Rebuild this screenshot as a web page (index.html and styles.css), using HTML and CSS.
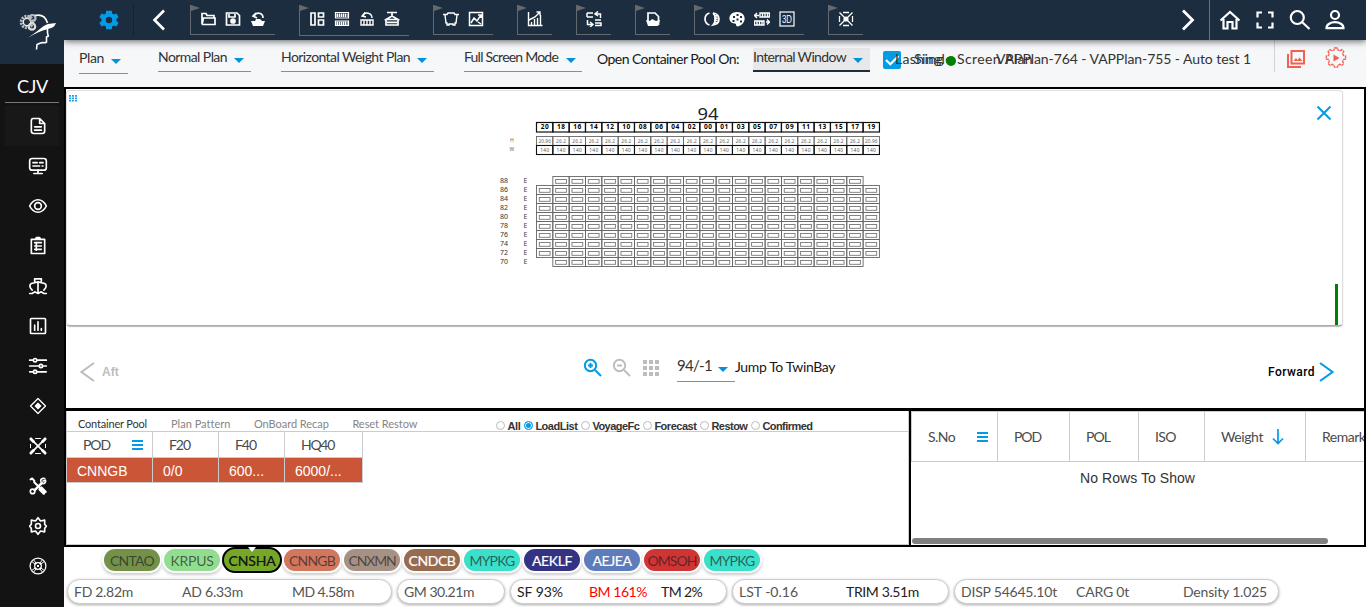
FILE: index.html
```html
<!DOCTYPE html>
<html lang="en">
<head>
<meta charset="utf-8">
<title>Stowage Planner</title>
<link rel="stylesheet" href="styles.css">
</head>
<body>
<div class="app">
  <aside class="sidebar">
    <div class="logo">
      <svg width="40" height="40" viewBox="0 0 40 40" fill="none" stroke="#fff">
        <circle cx="9" cy="10" r="5.800" stroke="#bbb" stroke-width="3" stroke-dasharray="2 1"/>
        <circle cx="9" cy="10" r="3.700" stroke="#eee" stroke-width="1.400"/>
        <circle cx="14.500" cy="6" r="3" stroke="#bbb" stroke-width="2.200"/><circle cx="14" cy="14.500" r="3.200" stroke="#ddd" stroke-width="2.200"/>
        <path d="M17 3.500c7-1.500 11 2.500 12.500 7.500M29.500 17v4l.8 3-1.800 1v5c-2 1.500-4 0-6 1l-3.500 1.500-.5 5" stroke-width="1.600"/>
        <path d="M9.500 26C18 21 24 14 30 12l8-1c-1.500 4-4 5-8 6-7 1.500-13 5-20.500 9z" fill="#fff" stroke="none"/>
      </svg>
    </div>
    <div class="vessel"><span class="fit" data-w="31">CJV</span></div>
    <nav class="side-nav" id="side-nav"></nav>
  </aside>
  <main class="main">
    <header class="topbar">
      <span class="gear-button"><svg width="24" height="24" viewBox="0 0 24 24" fill="#039be5"><path d="M19.400 13c.1-.7.1-1.300 0-2l2.200-1.700-2.100-3.700-2.600 1c-.5-.4-1.100-.7-1.700-1L14.800 2.700H9.200l-.4 2.900c-.6.3-1.200.6-1.700 1l-2.600-1-2.100 3.700L4.600 11c-.1.700-.1 1.300 0 2l-2.200 1.700 2.100 3.700 2.600-1c.5.4 1.100.7 1.700 1l.4 2.900h5.600l.4-2.900c.6-.3 1.200-.6 1.700-1l2.600 1 2.100-3.700zM12 15.200a3.200 3.200 0 1 1 0-6.400 3.200 3.200 0 0 1 0 6.400z"/></svg></span>
      <span class="previous"><svg width="14" height="22" viewBox="0 0 14 22"><path d="M12 1.500 2.500 11 12 20.500" fill="none" stroke="#fff" stroke-width="2.600"/></svg></span>
      <div class="tools" id="tools"></div>
      <span class="next"><svg width="14" height="22" viewBox="0 0 14 22"><path d="M2 1.500 11.500 11 2 20.500" fill="none" stroke="#fff" stroke-width="2.800"/></svg></span>
      <div class="account">
        <svg viewBox="0 0 24 24"><path d="M2.500 12.500 12 4l9.500 8.500M5.500 11v9.500h4V14h5v6.500h4V11"/></svg>
        <svg viewBox="0 0 24 24"><path d="M4.500 9.500v-5H9M15 4.500h4.500v5M19.500 14.500v5H15M9 19.500H4.500v-5"/></svg>
        <svg viewBox="0 0 24 24"><circle cx="9.300" cy="9.500" r="6.500"/><path d="m14 14 7.500 7"/></svg>
        <svg viewBox="0 0 24 24"><circle cx="12" cy="7" r="4"/><path d="M3.500 20.200c0-8 17-8 17 0z"/></svg>
      </div>
    </header>
    <section class="filters">
      <div class="select s-plan"><span class="fit" data-w="25">Plan</span><i class="caret"></i></div>
      <div class="select s-normal"><span class="fit" data-w="69">Normal Plan</span><i class="caret"></i></div>
      <div class="select s-weight"><span class="fit" data-w="129">Horizontal Weight Plan</span><i class="caret"></i></div>
      <div class="select s-mode"><span class="fit" data-w="94">Full Screen Mode</span><i class="caret"></i></div>
      <label class="pool-label"><span class="fit" data-w="142">Open Container Pool On:</span></label>
      <div class="select s-window"><span class="fit" data-w="93">Internal Window</span><i class="caret"></i></div>
      <span class="checkbox"><svg width="18" height="18" viewBox="0 0 18 18"><path d="m3 9 4.300 4.300L15.500 5" fill="none" stroke="#fff" stroke-width="2.200"/></svg></span>
      <div class="plan-info">
        <span class="fit single" data-w="119">Single Screen Plan</span>
        <span class="fit lashing" data-w="49">Lashing</span>
        <i class="status"></i>
        <span class="fit plan-name" data-w="255">VAPPlan-764 - VAPPlan-755 - Auto test 1</span>
      </div>
      <div class="plan-actions">
        <svg width="20" height="20" viewBox="0 0 20 20" fill="none" stroke="#f4604f" stroke-width="2"><path d="M5.500 2h12.500v12.500H5.500zM2 5v13h13"/><path d="m7.500 12 2.500-3 1.500 2 2-2.500 3 3.500z" fill="#f4604f" stroke="none"/></svg>
        <svg width="22" height="22" viewBox="0 0 22 22" fill="none" stroke="#f4604f"><path d="M9.500 1h3l.5 2 2 .8 1.800-1.200 2 2-1.200 1.900.8 2 2.200.5v3l-2.200.5-.8 2 1.200 2-2 2-1.800-1.200-2 .8-.5 2h-3l-.5-2-2-.8-1.900 1.200-2-2 1.200-2-.8-2L1.300 12V9l2.200-.5.8-2-1.200-1.900 2-2L7 3.800 9 3z" stroke-width="1.300" stroke-dasharray="3 .6"/><path d="m8.500 7.500 6 3.500-6 3.500z" fill="#f4604f" stroke="none"/></svg>
      </div>
    </section>
    <section class="workspace">
      <div class="bay-pane">
        <div class="bay-card">
          <svg class="grip" width="8" height="7" viewBox="0 0 8 7"><path d="M1 0v7M4 0v7M7 0v7" stroke="#039be5" stroke-width="1.800" stroke-dasharray="1.700 .7"/></svg>
          <svg class="bay" id="bay" width="400" height="172" viewBox="490 100 400 172"></svg>
          <svg class="close" width="16" height="16" viewBox="0 0 16 16"><path d="m1.500 1.500 13 13m0-13-13 13" stroke="#039be5" stroke-width="2"/></svg>
          <i class="meter"></i>
        </div>
        <div class="bay-nav">
          <svg class="aft-arrow" width="15" height="20" viewBox="0 0 15 20"><path d="M14 1 1.500 10 14 19" fill="none" stroke="#bdbdbd" stroke-width="2"/></svg>
          <b class="aft">Aft</b>
          <div class="zoom-tools">
            <svg width="20" height="20" viewBox="0 0 20 20" fill="none" stroke="#039be5" stroke-width="2"><circle cx="7.500" cy="7.500" r="5.700"/><path d="m12 12 6 6M7.500 5v5M5 7.500h5"/></svg>
            <svg width="20" height="20" viewBox="0 0 20 20" fill="none" stroke="#bdbdbd" stroke-width="1.900"><circle cx="7.500" cy="7.500" r="5.700"/><path d="m12 12 6 6M5 7.500h5"/></svg>
            <svg width="20" height="20" viewBox="0 0 20 20" fill="#bdbdbd"><path d="M2 2h4v4H2zm6 0h4v4H8zm6 0h4v4h-4zM2 8h4v4H2zm6 0h4v4H8zm6 0h4v4h-4zM2 14h4v4H2zm6 0h4v4H8zm6 0h4v4h-4z"/></svg>
          </div>
          <div class="select s-bay"><span class="fit" data-w="35">94/-1</span><i class="caret"></i></div>
          <span class="fit jump" data-w="100">Jump To TwinBay</span>
          <b class="fit forward" data-w="47">Forward</b>
          <svg class="forward-arrow" width="15" height="20" viewBox="0 0 15 20"><path d="M1 1l12.500 9L1 19" fill="none" stroke="#039be5" stroke-width="2"/></svg>
        </div>
      </div>
      <div class="lists">
        <div class="pool">
          <div class="tabs">
            <span class="fit tab active" data-w="69">Container Pool</span><span class="fit tab" data-w="59">Plan Pattern</span><span class="fit tab" data-w="75">OnBoard Recap</span><span class="fit tab" data-w="65">Reset Restow</span>
            <div class="radios">
              <i></i><b class="fit" data-w="13">All</b><i class="on"></i><b class="fit" data-w="42">LoadList</b><i></i><b class="fit" data-w="47">VoyageFc</b><i></i><b class="fit" data-w="42">Forecast</b><i></i><b class="fit" data-w="36">Restow</b><i></i><b class="fit" data-w="50">Confirmed</b>
            </div>
          </div>
          <div class="pool-body">
            <div class="pool-grid head"><div><span class="fit" data-w="27">POD</span><i class="menu"></i></div><div><span class="fit" data-w="21">F20</span></div><div><span class="fit" data-w="21">F40</span></div><div><span class="fit" data-w="33">HQ40</span></div></div>
            <div class="pool-grid row"><div>CNNGB</div><div>0/0</div><div>600...</div><div>6000/...</div></div>
          </div>
        </div>
        <div class="cargo">
          <div class="cargo-head"><div><span class="fit" data-w="27">S.No</span><i class="menu"></i></div><div><span class="fit" data-w="27">POD</span></div><div><span class="fit" data-w="24">POL</span></div><div><span class="fit" data-w="21">ISO</span></div><div><span class="fit" data-w="42">Weight</span><svg width="12" height="16" viewBox="0 0 12 16"><path d="M6 0v14M1 9.500l5 5 5-5" fill="none" stroke="#039be5" stroke-width="1.700"/></svg></div><div><span class="fit" data-w="49">Remarks</span></div></div>
          <div class="empty"><span class="fit" data-w="115">No Rows To Show</span></div>
          <i class="scrollbar"></i>
        </div>
      </div>
    </section>
    <div class="ports" id="ports"></div>
    <footer class="stats">
      <div class="stat s1"><span class="fit" data-w="59">FD 2.82m</span><span class="fit" data-w="61">AD 6.33m</span><span class="fit" data-w="62">MD 4.58m</span></div>
      <div class="stat s2"><span class="fit" data-w="70">GM 30.21m</span></div>
      <div class="stat s3"><span class="fit" data-w="46">SF 93%</span><span class="fit alert" data-w="58">BM 161%</span><span class="fit" data-w="41">TM 2%</span></div>
      <div class="stat s4"><span class="fit" data-w="59">LST -0.16</span><span class="fit strong" data-w="73">TRIM 3.51m</span></div>
      <div class="stat s5"><span class="fit" data-w="96">DISP 54645.10t</span><span class="fit" data-w="53">CARG 0t</span><span class="fit" data-w="84">Density 1.025</span></div>
    </footer>
  </main>
</div>
<script src="app.js"></script>
</body>
</html>
```
FILE: styles.css
```css
* { box-sizing: border-box; }
body { margin: 0; width: 1366px; height: 607px; overflow: hidden; background: #fff; font: 14px Lato, "Open Sans", sans-serif; color: #333; }
svg { display: block; flex: none; }
i { display: block; flex: none; }
.fit { display: inline-block; flex: none; white-space: nowrap; }
.app { display: grid; grid-template-columns: 64px 1302px; height: 607px; }

.sidebar { background: #131313; }
.logo { height: 64px; background: #1b2d3f; padding: 12px 0 0 18px; }
.vessel { height: 39px; margin: 0 5px; padding: 11px 0 0 12px; border-bottom: 1px solid #75797c; color: #fff; font-size: 18px; line-height: 22px; }
.side-nav { padding-top: 3px; }
.side-item { height: 40px; margin: 0 5px; padding: 10px 0 0 23px; }
.side-item.active { background: #181818; }
.side-item svg { width: 20px; height: 20px; fill: none; stroke: #fff; stroke-width: 2; stroke-linecap: round; stroke-linejoin: round; }

.main { display: grid; grid-template-rows: 40px 47px 460px 29px 31px; min-width: 0; }
.topbar { display: flex; background: #1b2d3f; box-shadow: 0 1px 7px rgba(0,0,0,.65); z-index: 2; clip-path: inset(0 0 -12px 0); }
.gear-button { flex: none; width: 70px; height: 32px; margin-top: 4px; padding: 4px 0 0 33px; border-right: 1px solid #16222f; }
.previous { flex: none; width: 56px; padding: 9px 0 0 18px; }
.tools { flex: none; display: flex; gap: 24px; padding-top: 5px; width: 990px; }
.tool-group { position: relative; height: 30px; display: flex; border-left: 1px solid #65686c; border-bottom: 1px solid #65686c; padding: 6px 5px 0 4px; }
.tool-group.low { height: 31px; }
.tool-group::before { content: ""; position: absolute; left: 0; top: 0; border-left: 9px solid #65686c; border-top: 3px solid transparent; border-bottom: 3px solid transparent; }
.tool-group svg { width: 16px; height: 16px; margin: 0 4.500px; fill: none; stroke: #fff; stroke-width: 1.700; }
.next { flex: none; width: 29px; padding-top: 9px; }
.next svg { margin-left: 1px; }
.account { display: flex; gap: 11px; padding: 8px 0 0 8px; border-left: 1px solid #65717d; }
.account svg { width: 24px; height: 24px; fill: none; stroke: #fff; stroke-width: 2.200; }

.filters { display: flex; align-items: flex-start; background: #f5f7f9; padding-left: 15px; }
.select { display: flex; justify-content: space-between; border-bottom: 1px solid #8b8d90; line-height: 18px; color: #333; }
.caret { width: 0; height: 0; border: 5px solid transparent; border-top-color: #0391dc; border-bottom: 0; margin: 10px 7px 0 0; }
.s-plan { width: 49px; height: 25px; margin: 9px 30px 0 0; }
.s-normal { width: 93px; height: 24px; margin: 8px 30px 0 0; }
.s-weight { width: 153px; height: 24px; margin: 8px 30px 0 0; }
.s-mode { width: 118px; height: 24px; margin: 8px 15px 0 0; }
.s-mode .caret { margin-right: 6px; }
.pool-label { width: 156px; margin-top: 9px; line-height: 20px; color: #171717; }
.s-window { width: 117px; height: 24px; margin: 8px 13px 0 0; background: #e8e8ea; border-bottom: 2px solid #1b2d3f; }
.checkbox { width: 18px; height: 18px; margin-top: 11px; border-radius: 2px; background: #039be5; }
.plan-info { position: relative; width: 374px; height: 32px; border-right: 1px solid #d0d2d5; color: #333; line-height: 18px; }
.single, .lashing, .plan-name, .status { position: absolute; top: 10px; }
.single { left: 13px; }
.lashing { left: -6px; }
.plan-name { left: 95px; }
.status { left: 45px; top: 16px; width: 10px; height: 10px; border-radius: 50%; background: green; }
.plan-actions { display: flex; gap: 19px; padding: 9px 0 0 11px; }
.plan-actions svg:last-child { margin-top: -2px; }

.workspace { border: 2px solid #000; display: grid; grid-template-rows: 319px 137px; min-width: 0; }
.bay-pane { min-width: 0; padding-top: 1px; }
.bay-card { position: relative; display: flex; align-items: flex-start; width: 1277px; height: 236px; border: 1px solid #ddd; border-bottom-color: #aaa; border-radius: 4px; box-shadow: 0 1px 1px #bbb; }
.grip { margin: 4px 0 0 2px; }
.bay { margin: 9px 0 0 413px; }
.close { margin: 14px 0 0 426px; }
.meter { position: absolute; right: 4px; bottom: 0; width: 3px; height: 41px; background: green; }
.bay-nav { display: flex; height: 80px; align-items: flex-start; padding-left: 14px; color: #171717; }
.aft-arrow { margin-top: 36px; }
.aft { width: 482px; margin: 38px 0 0 7px; color: #bdbdbd; font: bold 12px/16px "Liberation Sans", sans-serif; }
.zoom-tools { display: flex; gap: 9px; padding-top: 32px; margin-left: -1px; width: 94px; }
.s-bay { width: 58px; height: 24px; margin-top: 32px; font-size: 15px; line-height: 15px; }
.s-bay .caret { margin-top: 9px; }
.jump { margin: 32px 433px 0 0; line-height: 18px; }
.forward { margin: 37px 4px 0 0; font: 500 12px/18px Roboto, sans-serif; color: #000; }
.forward-arrow { margin-top: 36px; }

.lists { display: grid; grid-template-columns: 843px 455px; border-top: 3px solid #000; min-width: 0; }
.pool { border: 1px solid #ccc; border-width: 0 1px 1px; }
.tabs { display: flex; height: 20px; padding: 6px 0 0 11px; gap: 24px; font-size: 11px; line-height: 14px; color: #858585; }
.tab.active { color: #333; }
.tab:nth-child(n+3) { margin-left: -.5px; }
.radios { position: relative; display: flex; margin-left: 52px; top: 2px; font: bold 11px/14px "Liberation Sans", sans-serif; color: #333; }
.radios i { width: 9px; height: 9px; margin: 2px 2px 0 4px; border: 1px solid #bbb; border-radius: 50%; background: #fff; }
.radios i:first-child { margin-left: 3px; }
.radios i.on { border-color: #039be5; box-shadow: inset 0 0 0 1px #fff; background: #039be5; }
.pool-body { border-top: 1px solid #ccc; }
.pool-grid { display: grid; grid-template-columns: 86px 66px 66px 78px; width: 296px; }
.pool-grid > div { border-right: 1px solid #ccc; border-bottom: 1px solid #ccc; display: flex; align-items: center; }
.head { height: 26px; color: #4a4a4a; }
.head > div { padding-left: 16px; }
.head .menu { margin-left: 22px; }
.row { height: 25px; font: 14px "Liberation Sans", sans-serif; color: #fff; }
.row > div { padding: 1px 0 0 10px; background: #cb5637; }
.menu { width: 11px; height: 10px; border-top: 2px solid #039be5; border-bottom: 2px solid #039be5; background: linear-gradient(#039be5, #039be5) 0 2px / 11px 2px no-repeat; }
.cargo { border-left: 2px solid #000; overflow: hidden; }
.cargo-head { display: grid; grid-template-columns: 86px 72px 69px 66px 101px 90px; width: 485px; height: 51px; border: 1px solid #ccc; border-width: 1px 0 1px 1px; color: #4a4a4a; }
.cargo-head > div { display: flex; align-items: center; padding: 0 0 0 16px; border-right: 1px solid #ccc; }
.cargo-head .menu { margin-left: 22px; }
.cargo-head svg { margin-left: 9px; }
.empty { height: 75px; padding-top: 6px; text-align: center; font: 14px/20px "Liberation Sans", sans-serif; }
.scrollbar { width: 416px; height: 6px; margin: 1px 0 0 1px; border-radius: 4px; background: #808080; }

.ports { display: flex; gap: 4px; padding: 2px 0 0 40px; }
.port { display: flex; justify-content: center; width: 56px; height: 22px; border-radius: 12px; line-height: 23px; font-size: 14px; color: rgba(30,30,30,.67); box-shadow: 0 0 0 2px #fff, 0 2px 3px 2px #ccc; }
.port.light { color: #fff; -webkit-text-stroke: .2px #fff; }
.port.current { position: relative; color: #111; box-shadow: 0 0 0 2px #000; -webkit-text-stroke: .2px #111; }
.port.current::before { content: ""; position: absolute; top: -2px; left: 24px; border: 4px solid transparent; border-top: 5px solid #fff; border-bottom: 0; }

.stats { display: flex; gap: 5px; padding: 3px 0 0 3px; }
.stat { display: flex; height: 25px; padding-left: 6px; border: 1px solid #ccc; border-radius: 13px; box-shadow: 0 1px 3px #aaa; line-height: 24px; color: #555; background: #fff; }
.s1 { width: 325px; gap: 49px; }
.s2 { width: 108px; }
.s3 { width: 217px; gap: 26px; color: #222; }
.s3 span:last-child { margin-left: -12px; }
.s4 { width: 217px; gap: 48px; }
.s5 { width: 325px; gap: 19px; }
.s5 span:last-child { margin-left: 35px; }
.alert { color: red; }
.strong { color: #222; }
```
FILE: app.js
```js
// Tool icons share a 16 unit grid.
const toolIcons = {
  open: '<path d="M2 13.500V2.500h4l1 2h7v2M2 13.500l1.500-6.500H15v6.500H2"/>',
  save: '<path d="M1.500 2h10.500l2.500 2.500V14h-13zM4 3v3h6V3"/><circle cx="8" cy="10" r="2" fill="#fff"/>',
  undoShip: '<path d="M4 5c2-4 9-4 9 2M6 2 3 5l4 2"/><path d="M1 10h4l1-2h4l2 2h3l-2 5H3z" fill="#fff" stroke="none"/>',
  layout: '<path d="M2 2h4v12H2zM9.500 2h5v4h-5zM9.500 9h5v5h-5z"/>',
  stacks: '<path d="M1.500 1.500h13V7h-13zM1.500 10h13v4.500h-13z" stroke-width="1.200"/><path d="M2.500 4.300h11M2.500 12.300h11" stroke-width="3.500" stroke-dasharray="1.500 .6"/>',
  undoBox: '<path d="M4 5c2-5 9-3 9 2M6 1.500 3 5l4 1M2 9h12v5H2zM5 9v5M8 9v5M11 9v5" stroke-width="1.400"/>',
  lift: '<path d="M3 1.500h10M8 2v3L2 8.500h12L8 5M2 8.500h12V14H2zM3 11.300h10"/>',
  bay: '<path d="M0 3.500h4l1-1.500h6l1 1.500h4M2 4l1 8h1v2h2v-1h4v1h2v-2h1l1-8" stroke-width="1.400"/>',
  image: '<path d="M1.500 1.500h13v13h-13zM3 12l3-5 3 3 4-6M10 4h3v3M10 11l3 2" stroke-width="1.500"/>',
  chart: '<path d="M1.500 1v13.500h14M4.500 14v-3M7.500 14V8M10.500 14V7M13.500 14V4M2 9l6-3 5-5M9.500 1H13v3.500" stroke-width="1.400"/>',
  swap: '<path d="M1 2h6M1 6h6M1 2v4M9 3h5.500v4M12 .5 9 3l3 2M1.500 9v4.500H6M4 11l3 2.500L4 16M9 9h6M9 12h6v2.500H9" stroke-width="1.500"/>',
  docShip: '<path d="M3 11V2h7l3.500 3.500V14"/><path d="m1 9 4 1 2-2 4 2 4-1-2 6H3z" fill="#fff" stroke="none"/>',
  contrast: '<path d="M5.500 2C-.5 4-.5 12 5.500 14M9 2c8 1 8 11 0 12 3-3 3-9 0-12"/><path d="M12 4v8" stroke-width="3.500" stroke-dasharray="1.700 .6"/>',
  palette: '<path fill="#fff" fill-rule="evenodd" stroke="none" d="M8 1C-2 1-1.500 13 6 12.500c2 0 0 3 3 3C18 13 18 1 8 1zM4 5h2v2H4zM7.500 3h2v2h-2zM11 5h2v2h-2zM3.500 9h2v2h-2zM7.500 7.500h2v2h-2zM11 9.500h2v2h-2z"/>',
  exchange: '<path d="M6 2h9.500v4H6zM.5 10H10v4H.500zM8.500 2v4M11 2v4M13.500 2v4M3 10v4M5.500 10v4M8 10v4M0 4.500h5M3 2 .5 4.500 3 7M12 11h4M13 8.500l2.500 2.500-2.500 2.500" stroke-width="1.400"/>',
  threeD: '<rect x="1" y="1" width="14" height="14" stroke-width="1.200"/><text x="3" y="11.800" fill="#fff" stroke="none" font-family="Liberation Sans" font-size="10" textLength="10" lengthAdjust="spacingAndGlyphs">3D</text>',
  cross: '<path d="M5 1.500h6M14.500 5v6M11 14.500H5M1.500 11V5M1.500 1.500l13 13M14.500 1.500l-13 13" stroke-width="1.300"/><circle cx="8" cy="8" r="2.600" fill="#fff" stroke="none"/>'
};
const groups = [['open','save','undoShip'],['layout','stacks','undoBox','lift'],['bay','image'],['chart'],['swap'],['docShip'],['contrast','palette','exchange','threeD'],['cross']];
document.getElementById('tools').innerHTML = groups.map((g, i) =>
  `<div class="tool-group${i === 1 ? ' low' : ''}">${g.map(n => `<svg viewBox="0 0 16 16">${toolIcons[n]}</svg>`).join('')}</div>`).join('');

// Sidebar icons share a 24 unit grid.
const sideIcons = [
  '<path d="M6 3h8l6 6v9q0 3-3 3H7q-3 0-3-3V6q0-3 2-3zM14 3v6h6M8 13h8M8 17h8"/>',
  '<rect x="2" y="3" width="20" height="14" rx="3"/><path d="M6 8h5M14 8h4M6 12h8M17 12h1M12 17v4M7 21h10"/>',
  '<path d="M2 12C7 2 17 2 22 12 17 22 7 22 2 12z"/><circle cx="12" cy="12" r="4"/>',
  '<path d="M4 4h16v17H4zM9 4l1-2h4l1 2M8 8h8M8 12h8M8 16h8M10 8v9"/>',
  '<path d="M8 7V3.500h8V7M5 17C1 13 2 10 4 9l8-2 8 2c2 1 3 4-1 8M12 7v13M2 21h3l3-2 4 2 4-2 3 2h3"/>',
  '<rect x="3" y="3" width="18" height="18" rx="1"/><path d="M8 17v-6M12 17V7M16 17v-2"/>',
  '<path d="M2 5h4M11 5h11M2 12h11M18 12h4M2 19h4M11 19h11"/><circle cx="8.500" cy="5" r="2"/><circle cx="15.500" cy="12" r="2"/><circle cx="8.500" cy="19" r="2"/>',
  '<path d="m12 3 9 9-9 9-9-9z" stroke-width="1.500"/><path d="m12 9 3 3-3 3-3-3z" fill="#fff"/>',
  '<path d="M4 4l16 16M20 4 4 20"/><path d="M3.500 3.500l3 3M20.500 3.500l-3 3M3.500 20.500l3-3M20.500 20.500l-3-3" stroke-width="3.500"/><path d="M9 3h6M9 21h6M3 10v4M21 10v4" stroke-width="1.200"/>',
  '<path d="m3 4 2-1 2.500 2.500v2L15 15" stroke-width="2.400"/><path d="m14 16 5 5M16 14l5 5" stroke-width="3"/><path d="M8 17 16.500 8.500" stroke-width="3"/><path d="M20 3c-5-1-6 3-3.500 5.500C19 10 22 8 21 5l-3 1"/><circle cx="5.500" cy="18.500" r="2.700"/>',
  '<path d="m12 2 3 4 5-1v5l2 2-2 3v4l-5-1-3 4-3-4-5 1v-4l-2-3 2-2V5l5 1z"/><circle cx="12" cy="12" r="3"/>',
  '<circle cx="12" cy="12" r="9.500" stroke-width="1.500"/><circle cx="12" cy="12" r="4" stroke-width="1.500"/><path d="M5 7l4 3M7 5l3 4M19 7l-4 3M17 5l-3 4M5 17l4-3M7 19l3-4M19 17l-4-3M17 19l-3-4M11 11l2 2M13 11l-2 2" stroke-width="1.200"/>'
];
document.getElementById('side-nav').innerHTML = sideIcons.map((p, i) =>
  `<div class="side-item${i ? '' : ' active'}"><svg viewBox="0 0 24 24">${p}</svg></div>`).join('');

// Bay profile: stack headers, limits and one slot per cell.
const cols = '20 18 16 14 12 10 08 06 04 02 00 01 03 05 07 09 11 13 15 17 19'.split(' ');
const x0 = 536.5, step = 16.33;
let bay = '<text x="697.500" y="120" font-size="17" textLength="21" lengthAdjust="spacingAndGlyphs" fill="#222">94</text>';
const cell = (x, y, h, c, w) => `<rect x="${x}" y="${y}" width="${step}" height="${h}" fill="none" stroke="${c}" stroke-width="${w}"/>`;
cols.forEach((n, i) => {
  const x = x0 + step * i, m = x + step / 2, edge = i === 0 || i === 20;
  bay += cell(x, 122.500, 9.500, '#111', 1.200) + cell(x, 136.500, 9, '#666', .9) + cell(x, 145.500, 9, '#111', 1.100);
  bay += `<text x="${m}" y="129.300" font-size="6.500" font-weight="700" text-anchor="middle" textLength="8">${n}</text>`;
  bay += `<text x="${m}" y="142.500" font-size="4.800" text-anchor="middle" textLength="${edge ? 12.5 : 10}" fill="#666">${edge ? '20.96' : '26.2'}</text>`;
  bay += `<text x="${m}" y="151.500" font-size="4.800" text-anchor="middle" textLength="9" fill="#555">140</text>`;
});
bay += '<text x="510" y="142" font-size="5" fill="#666">H</text><text x="509.500" y="151" font-size="5" fill="#666">W</text>';
for (let r = 0; r < 10; r++) {
  const y = 176.500 + r * 9;
  bay += `<text x="500" y="${y + 6}" font-size="7" textLength="8" fill="#333">${88 - 2 * r}</text><text x="523.500" y="${y + 6}" font-size="7" fill="#444">E</text>`;
  cols.forEach((n, i) => {
    if ((r === 0 || r === 9) && (i === 0 || i === 20)) return;
    const x = x0 + step * i;
    bay += cell(x, y, 9, '#666', .9) + `<rect x="${x + 2.800}" y="${y + 3}" width="10.800" height="3.800" fill="#fff" stroke="#777" stroke-width=".9"/>`;
  });
}
document.getElementById('bay').innerHTML = `<g font-family="Noto Sans, sans-serif">${bay}</g>`;

// Port rotation, in call order.
const ports = [['CNTAO','#74914a',44],['KRPUS','#91de91',43],['CNSHA','#75a829',47,'current'],['CNNGB','#d2765e',46],['CNXMN','#a69184',47],['CNDCB','#986b4e',47,'light'],['MYPKG','#3be0ca',45],['AEKLF','#343383',40,'light'],['AEJEA','#5d7cbb',39,'light'],['OMSOH','#d13435',49],['MYPKG','#3be0ca',45]];
document.getElementById('ports').innerHTML = ports.map(p =>
  `<div class="port ${p[3] || ''}" style="background:${p[1]}"><span class="fit" data-w="${p[2]}">${p[0]}</span></div>`).join('');

// Tracks each label to the width set for it.
document.querySelectorAll('.fit').forEach(el => {
  const natural = el.getBoundingClientRect().width;
  el.style.letterSpacing = (el.dataset.w - natural) / el.textContent.length + 'px';
});
```
